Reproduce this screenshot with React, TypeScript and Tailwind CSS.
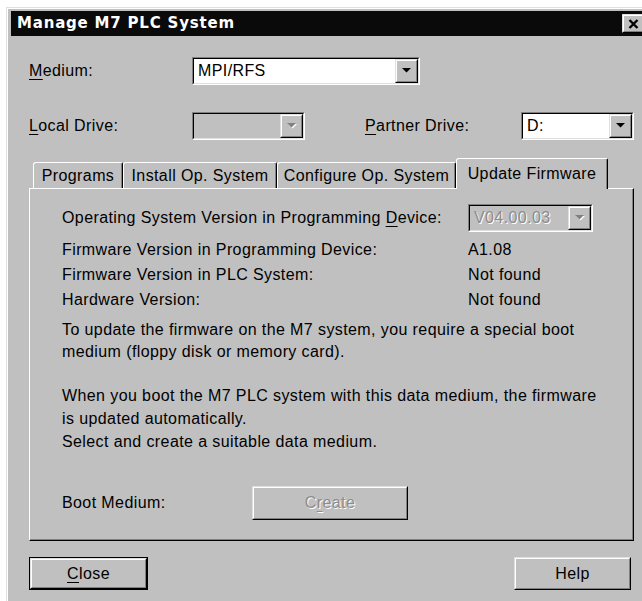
import type { ReactNode } from "react";

// Win95-style bevels
const sunkenOuter = "border border-t-[#808080] border-l-[#808080] border-b-white border-r-white";
const sunkenInner = "border border-t-black border-l-black border-b-[#dfdfdf] border-r-[#dfdfdf]";
const raisedOuter = "border border-t-[#dfdfdf] border-l-[#dfdfdf] border-b-black border-r-black";
const raisedInner = "border border-t-white border-l-white border-b-[#808080] border-r-[#808080]";

function Mn({ children }: { children: ReactNode }) {
  return <span className="underline underline-offset-[3px] decoration-1">{children}</span>;
}

function Arrow({ disabled }: { disabled?: boolean }) {
  return (
    <svg width="12" height="8" viewBox="0 0 12 8">
      {disabled && <polygon points="2,2 11,2 6.5,6.5" fill="#ffffff" />}
      <polygon points="1,1 10,1 5.5,5.5" fill={disabled ? "#808080" : "#000000"} />
    </svg>
  );
}

function Combo({
  value,
  className,
  disabled,
}: {
  value?: string;
  className: string;
  disabled?: boolean;
}) {
  return (
    <div className={`flex h-[28px] ${sunkenOuter} ${className}`}>
      <div
        className={`flex flex-1 items-stretch ${sunkenInner} ${
          disabled ? "bg-[#c0c0c0]" : "bg-white"
        }`}
      >
        <span
          className={`flex flex-1 items-center pl-[4px] ${
            disabled ? "text-[#8c8c8c] [text-shadow:1px_1px_0_#ffffff]" : "text-black"
          }`}
        >
          {value}
        </span>
        <div className={`w-[23px] bg-[#c0c0c0] ${raisedOuter}`}>
          <div className={`flex h-full items-center justify-center ${raisedInner}`}>
            <Arrow disabled={disabled} />
          </div>
        </div>
      </div>
    </div>
  );
}

function Button({
  children,
  className,
  isDefault,
  disabled,
}: {
  children: ReactNode;
  className: string;
  isDefault?: boolean;
  disabled?: boolean;
}) {
  const body = (
    <div className={`h-full ${raisedOuter}`}>
      <div
        className={`flex h-full items-center justify-center ${raisedInner} ${
          disabled ? "text-[#8c8c8c] [text-shadow:1px_1px_0_#ffffff]" : "text-black"
        }`}
      >
        {children}
      </div>
    </div>
  );
  return (
    <div className={`bg-[#c0c0c0] ${isDefault ? "border border-black" : ""} ${className}`}>
      {body}
    </div>
  );
}

function Tab({ label, className, selected }: { label: string; className: string; selected?: boolean }) {
  return (
    <div
      className={`flex items-center justify-center rounded-tl-[3px] rounded-tr-[2px] border-t border-l border-r border-t-white border-l-white border-r-black bg-[#c0c0c0] shadow-[inset_-1px_0_#808080] ${
        selected ? "relative z-10 -mb-px h-[31px]" : "h-[26px]"
      } ${className}`}
    >
      {label}
    </div>
  );
}

const tabs = [
  { label: "Programs", w: "w-[90px]" },
  { label: "Install Op. System", w: "w-[154px]" },
  { label: "Configure Op. System", w: "w-[179px]" },
];

const versions = [
  { label: "Firmware Version in Programming Device:", value: "A1.08" },
  { label: "Firmware Version in PLC System:", value: "Not found" },
  { label: "Hardware Version:", value: "Not found" },
];

export default function App() {
  return (
    <div className="h-[601px] w-[642px] overflow-hidden bg-white font-['Liberation_Sans',Arial,sans-serif] text-[16px] tracking-[0.4px] text-black">
      <div className="ml-[6px] mt-[7px] w-[700px] border-t border-l border-[#dfdfdf]">
        <div className="h-[620px] border-t border-l border-white bg-[#c0c0c0] pl-[3px] pt-[2px]">
          {/* Title bar */}
          <div className="flex h-[25px] w-[637px] items-center justify-between bg-[#0a0a0a] pl-[6px] pr-[4px]">
            <span className="font-['DejaVu_Sans',Verdana,sans-serif] text-[15px] font-bold tracking-[0.8px] text-white">
              Manage M7 PLC System
            </span>
            <div className={`h-[19px] w-[22px] bg-[#c0c0c0] ${raisedOuter}`}>
              <div className={`flex h-full items-center justify-center ${raisedInner}`}>
                <svg width="11" height="10" viewBox="0 0 11 10">
                  <path d="M1.5 1 L9.5 9 M9.5 1 L1.5 9" stroke="#000" strokeWidth="2.4" />
                </svg>
              </div>
            </div>
          </div>

          <div className="pl-[18px]">
            {/* Medium */}
            <div className="mt-[21px] flex items-center">
              <span className="w-[163px]">
                <Mn>M</Mn>edium:
              </span>
              <Combo value="MPI/RFS" className="w-[228px]" />
            </div>

            {/* Drives */}
            <div className="mt-[27px] flex items-center">
              <span className="w-[163px]">
                <Mn>L</Mn>ocal Drive:
              </span>
              <Combo className="w-[113px]" disabled />
              <span className="ml-[60px] w-[156px]">
                <Mn>P</Mn>artner Drive:
              </span>
              <Combo value="D:" className="w-[113px]" />
            </div>

            {/* Tabs */}
            <div className="mt-[18px] flex h-[30px] items-end pl-[4px]">
              {tabs.map((t) => (
                <Tab key={t.label} label={t.label} className={t.w} />
              ))}
              <Tab label="Update Firmware" className="w-[152px]" selected />
            </div>

            <div className="h-[353px] w-[605px] border-t border-l border-b border-r border-t-white border-l-white border-b-black border-r-black pl-[32px] pt-[15px] shadow-[inset_-1px_-1px_#808080]">
              <div className="flex items-center">
                <span className="w-[406px]">
                  Operating System Version in Programming <Mn>D</Mn>evice:
                </span>
                <Combo value="V04.00.03" className="w-[125px]" disabled />
              </div>
              <div className="mt-[5px]">
                {versions.map((v) => (
                  <div key={v.label} className="flex h-[25px] items-center">
                    <span className="w-[406px]">{v.label}</span>
                    <span>{v.value}</span>
                  </div>
                ))}
              </div>

              <p className="mt-[7px] leading-[22px]">
                To update the firmware on the M7 system, you require a special boot
                <br />
                medium (floppy disk or memory card).
              </p>
              <p className="mt-[21px] leading-[23px]">
                When you boot the M7 PLC system with this data medium, the firmware
                <br />
                is updated automatically.
              </p>
              <p className="leading-[23px]">Select and create a suitable data medium.</p>

              <div className="mt-[33px] flex items-center">
                <span className="w-[190px]">Boot Medium:</span>
                <Button className="h-[34px] w-[156px]" disabled>
                  C<Mn>r</Mn>eate
                </Button>
              </div>
            </div>

            {/* Dialog buttons */}
            <div className="mt-[16px] flex w-[602px] justify-between">
              <Button className="h-[33px] w-[119px]" isDefault>
                <Mn>C</Mn>lose
              </Button>
              <Button className="h-[33px] w-[117px]">Help</Button>
            </div>
          </div>
        </div>
      </div>
    </div>
  );
}
